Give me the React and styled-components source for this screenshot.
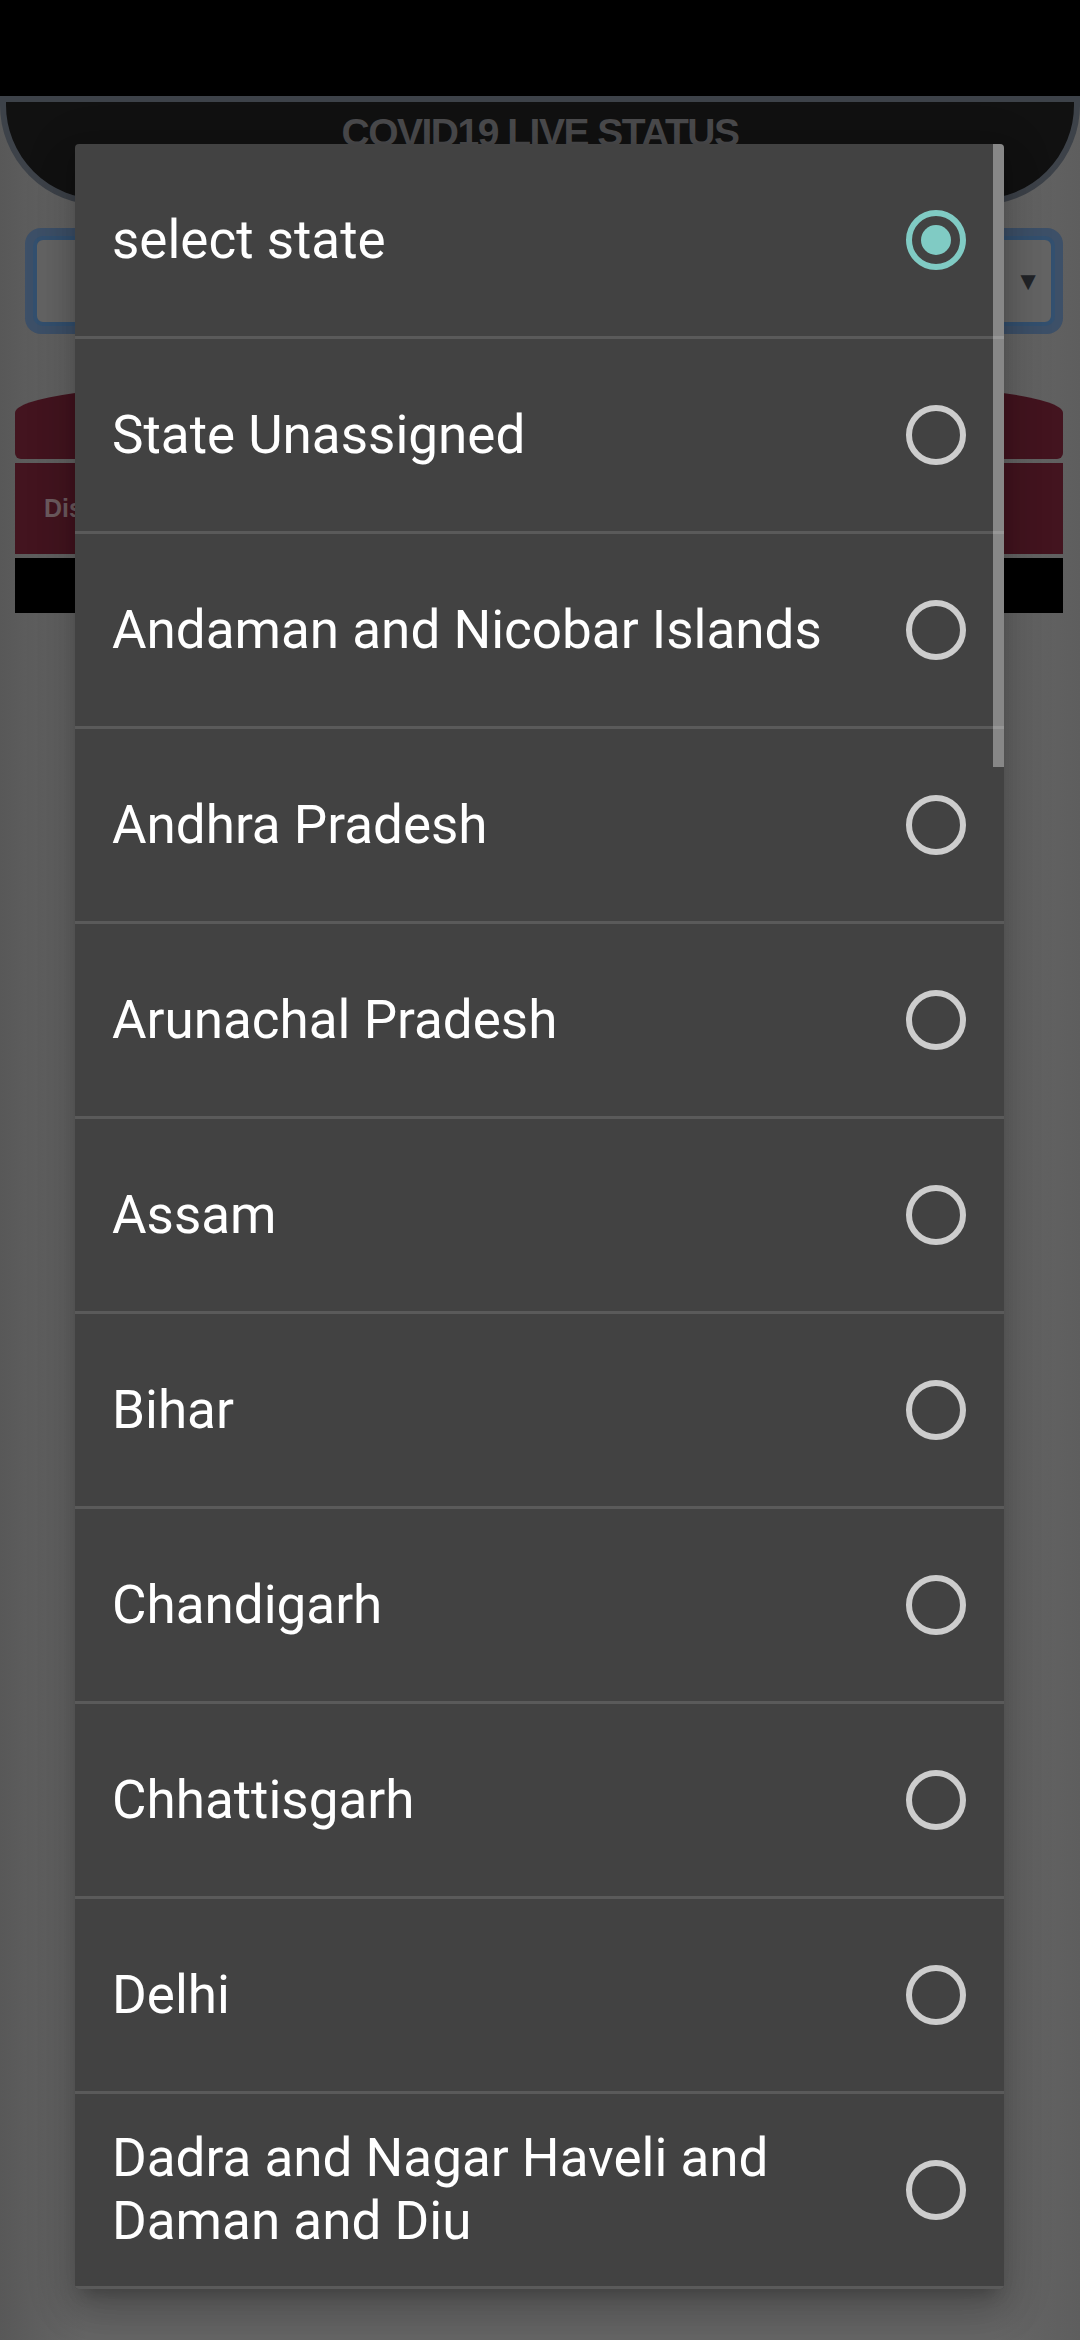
import React from 'react';
import styled, { createGlobalStyle } from 'styled-components';

const GlobalStyle = createGlobalStyle`
  html, body {
    margin: 0;
    padding: 0;
    background: #666666;
  }
`;

const Screen = styled.div`
  position: relative;
  width: 1080px;
  height: 2340px;
  overflow: hidden;
  background: linear-gradient(90deg, #585858 0%, #666666 8%, #666666 92%, #5e5e5e 100%);
  font-family: Roboto, "Noto Sans", sans-serif;
`;

const StatusBar = styled.div`
  height: 96px;
  background: #000;
`;

const Header = styled.header`
  height: 86px;
  background: #111111;
  border: 6px solid #3d4249;
  border-radius: 0 0 100px 100px;
  display: flex;
  justify-content: center;
  padding-top: 11px;
  box-sizing: content-box;
`;

const Title = styled.h1`
  margin: 0;
  font-family: "Liberation Sans", sans-serif;
  font-weight: 700;
  font-size: 39px;
  line-height: 39px;
  color: #4a4a4c;
  letter-spacing: -1.5px;
`;

const SelectWrap = styled.div`
  margin: 23px 17px 0 25px;
  height: 106px;
  border-radius: 16px;
  background: #3d5068;
  padding: 8px;
  box-sizing: border-box;
`;

const SelectBox = styled.div`
  height: 100%;
  border: 4px solid #33506f;
  border-radius: 10px;
  background: #646464;
  box-sizing: border-box;
  display: flex;
  align-items: center;
  justify-content: flex-end;
  padding-right: 10px;
  color: #222428;
  font-size: 26px;
`;

const Card = styled.section`
  margin: 51px 17px 0 15px;
  display: flex;
  flex-direction: column;
  gap: 4px;
`;

const CardTop = styled.div`
  height: 74px;
  background: #43141f;
  border-radius: 200px 200px 6px 6px / 28px 28px 6px 6px;
`;

const CardBody = styled.div`
  height: 91px;
  background: #43141f;
  display: flex;
  align-items: center;
  padding-left: 29px;
  font-family: "Liberation Sans", sans-serif;
  font-weight: 700;
  font-size: 25px;
  color: #6e5c60;
`;

const CardFoot = styled.div`
  height: 55px;
  background: #000;
`;

const Dialog = styled.div`
  position: absolute;
  top: 144px;
  left: 75px;
  width: 929px;
  background: #424242;
  border-radius: 4px;
  overflow: hidden;
  box-shadow: 0 24px 38px 3px rgba(0, 0, 0, 0.14), 0 9px 46px 8px rgba(0, 0, 0, 0.12),
    0 11px 15px -7px rgba(0, 0, 0, 0.2);
`;

const Option = styled.div`
  height: 192px;
  border-bottom: 3px solid #5a5a5a;
  display: flex;
  align-items: center;
  padding: 0 38px 0 37px;
`;

const Label = styled.span`
  flex: 1;
  font-size: 53px;
  line-height: 63px;
  color: #ffffff;
  padding-right: 30px;
`;

const Radio = styled.span`
  flex: none;
  width: 60px;
  height: 60px;
  border-radius: 50%;
  border: 6px solid ${p => (p.checked ? '#80cbc4' : '#cdcdcd')};
  box-sizing: border-box;
  display: flex;
  align-items: center;
  justify-content: center;

  &::after {
    content: '';
    width: 30px;
    height: 30px;
    border-radius: 50%;
    background: #80cbc4;
    display: ${p => (p.checked ? 'block' : 'none')};
  }
`;

const Scrollbar = styled.div`
  position: absolute;
  top: 0;
  right: 0;
  width: 11px;
  height: 623px;
  background: rgba(255, 255, 255, 0.37);
`;

const states = [
  'select state',
  'State Unassigned',
  'Andaman and Nicobar Islands',
  'Andhra Pradesh',
  'Arunachal Pradesh',
  'Assam',
  'Bihar',
  'Chandigarh',
  'Chhattisgarh',
  'Delhi',
  'Dadra and Nagar Haveli and Daman and Diu',
];

export default function App() {
  return (
    <>
      <GlobalStyle />
      <Screen>
        <StatusBar />
        <Header>
          <Title>COVID19 LIVE STATUS</Title>
        </Header>
        <SelectWrap>
          <SelectBox>▼</SelectBox>
        </SelectWrap>
        <Card>
          <CardTop />
          <CardBody>Dis</CardBody>
          <CardFoot />
        </Card>

        <Dialog>
          {states.map((s, i) => (
            <Option key={s}>
              <Label>{s}</Label>
              <Radio checked={i === 0} />
            </Option>
          ))}
          <Scrollbar />
        </Dialog>
      </Screen>
    </>
  );
}
